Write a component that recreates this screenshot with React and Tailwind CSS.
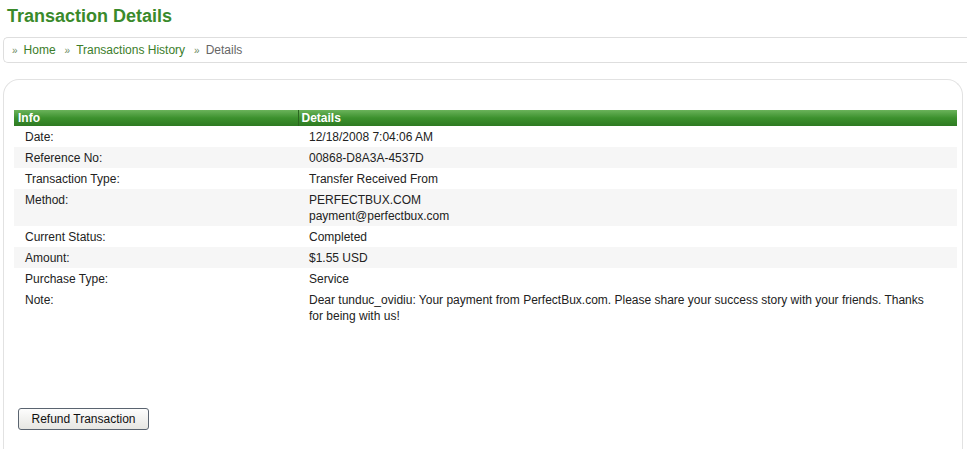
const rows = [
  { label: 'Date:', value: ['12/18/2008 7:04:06 AM'] },
  { label: 'Reference No:', value: ['00868-D8A3A-4537D'], shaded: true },
  { label: 'Transaction Type:', value: ['Transfer Received From'] },
  { label: 'Method:', value: ['PERFECTBUX.COM', 'payment@perfectbux.com'], shaded: true },
  { label: 'Current Status:', value: ['Completed'] },
  { label: 'Amount:', value: ['$1.55 USD'], shaded: true },
  { label: 'Purchase Type:', value: ['Service'] },
  {
    label: 'Note:',
    value: [
      'Dear tunduc_ovidiu: Your payment from PerfectBux.com. Please share your success story with your friends. Thanks for being with us!'
    ]
  }
];

const Crumb = ({ children, last }) => (
  <span className="flex items-center">
    <span className="mr-[6px] text-[10px] text-[#6b8a5e]">»</span>
    <span className={last ? 'text-[#666]' : 'text-[#3b7d2a]'}>{children}</span>
  </span>
);

const App = () => {
  return (
    <div className="h-[449px] w-[967px] overflow-hidden bg-white font-['Liberation_Sans',Arial,sans-serif] text-[12px] text-[#222]">
      <h1 className="pl-[7px] pt-[5px] text-[18px] font-bold leading-[22px] text-[#3a8a2b]">
        Transaction Details
      </h1>

      <div className="ml-[3px] mt-[10px] flex h-[26px] items-center gap-[9px] rounded-l-[5px] border border-r-0 border-[#dedede] pl-[8px]">
        <Crumb>Home</Crumb>
        <Crumb>Transactions History</Crumb>
        <Crumb last>Details</Crumb>
      </div>

      <div className="ml-[3px] mr-[4px] mt-[16px] h-[400px] rounded-t-[16px] border border-b-0 border-[#e2e2e2] px-[10px] pt-[30px]">
        <table className="w-[943px] border-collapse text-left">
          <thead>
            <tr className="h-[16px] bg-gradient-to-b from-[#6ab35a] via-[#3c912d] to-[#2e7a22] text-white">
              <th className="w-[284px] border-r border-[#2a661f] pl-[4px] text-[12px] font-bold leading-[16px]">Info</th>
              <th className="pl-[3px] text-[12px] font-bold leading-[16px]">Details</th>
            </tr>
          </thead>
          <tbody>
            {rows.map((row) => (
              <tr key={row.label} className={row.shaded ? 'bg-[#f6f6f6]' : ''}>
                <td className="pl-[11px] pt-[3px] pb-[2px] align-top leading-4">{row.label}</td>
                <td className="pl-[11px] pr-[26px] pt-[3px] pb-[2px] align-top leading-4">
                  {row.value.map((line) => (
                    <div key={line}>{line}</div>
                  ))}
                </td>
              </tr>
            ))}
          </tbody>
        </table>

        <div className="mt-[82px] pl-[4px]">
          <button className="h-[22px] w-[131px] rounded-[3px] border border-[#5a6470] bg-gradient-to-b from-[#fdfdfd] to-[#e6e6e2] text-[12px] leading-[18px] text-[#111]">
            Refund Transaction
          </button>
        </div>
      </div>
    </div>
  );
};

export default App;
